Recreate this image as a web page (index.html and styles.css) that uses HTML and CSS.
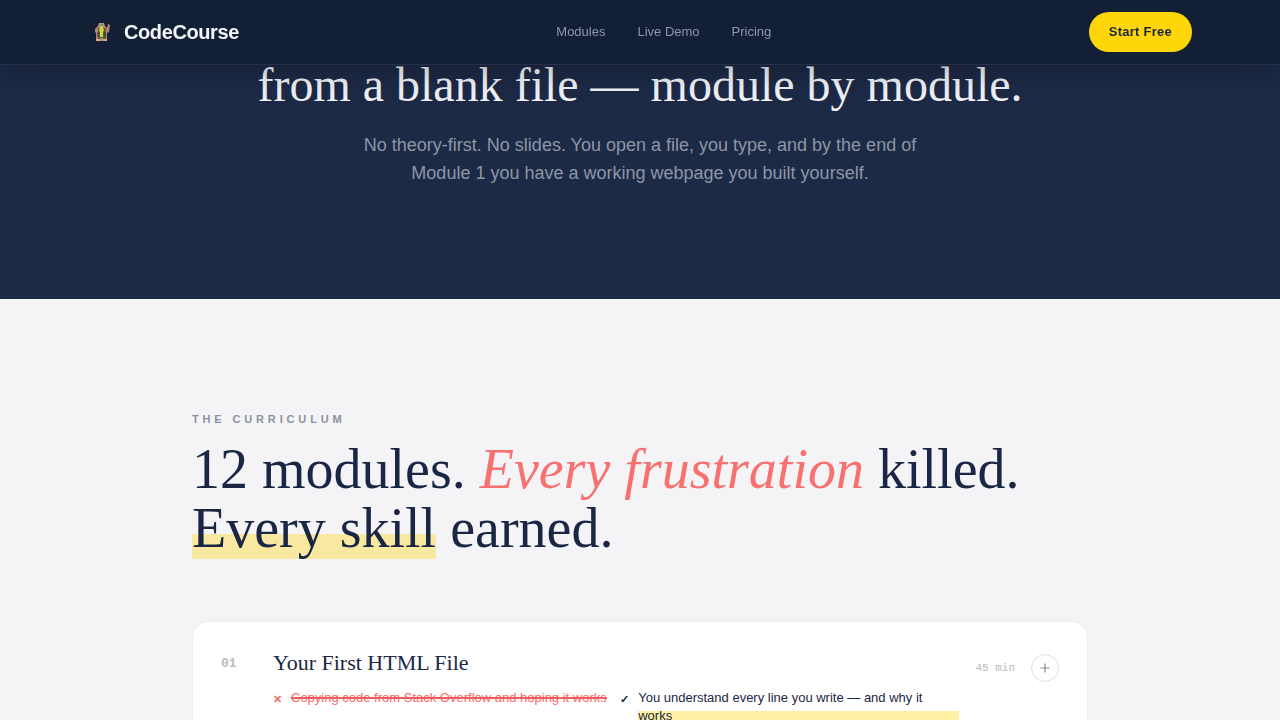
FILE: index.html
```html
<!DOCTYPE html>
<html lang="en">

<head>
    <meta charset="UTF-8">
    <meta name="viewport" content="width=device-width, initial-scale=1.0">
    <title>CodeCourse</title>
    <link rel="stylesheet" href="styles.css">
</head>

<body>

    <header class="header">
        <div class="header-inner">
            <a class="brand" href="#">
                <span class="brand-icon">
                    <svg width="16" height="20" viewBox="0 0 16 20" aria-hidden="true">
                        <path d="M4 4 L5 1 H10 L11 4 V7 H4Z" fill="#b99a78"/>
                        <path d="M1 7 L4 4 H11 L13 6 L14 2 L16 3 L15 10 L13 11 V19 H2 V11 L1 10Z" fill="#b58478"/>
                        <path d="M4 6 H12 V17 H4Z" fill="#5d5a38"/>
                        <path d="M6 4 H9 V6 L10 8 L9 10 V15 H6 V10 L5 8 L6 6Z" fill="#cfd43e"/>
                        <path d="M6 2 H9 V4 H6Z" fill="#8d8568"/>
                        <path d="M4 10 V15 M11 10 V15" stroke="#2b3440" stroke-width="1"/>
                        <path d="M2 17 H6 V19 H2Z M9 17 H13 V19 H9Z" fill="#d8aaa0"/>
                        <path d="M6 16 H9 V19 H6Z" fill="#a59a62"/>
                    </svg>
                </span>
                CodeCourse
            </a>
            <nav class="nav">
                <a href="#modules">Modules</a>
                <a href="#demo">Live Demo</a>
                <a href="#pricing">Pricing</a>
            </nav>
            <button class="start" type="button">Start Free</button>
        </div>
    </header>

    <section class="hero" id="demo">
        <h1>from a blank file — module by module.</h1>
        <p>No theory-first. No slides. You open a file, you type, and by the end of Module 1 you have a working webpage you built yourself.</p>
    </section>

    <section class="curriculum" id="modules">
        <div class="eyebrow">The Curriculum</div>
        <h2>12 modules. <em>Every frustration</em> killed.<br><span class="marker">Every skill</span> earned.</h2>

        <article class="module">
            <span class="module-num">01</span>
            <div class="module-body">
                <h3>Your First HTML File</h3>
                <div class="compare">
                    <div class="point before">
                        <span class="mark">✕</span>
                        <span class="text"><s>Copying code from Stack Overflow and hoping it works</s></span>
                    </div>
                    <div class="point after">
                        <span class="mark">✓</span>
                        <span class="text">You understand every line you write — and why it works</span>
                    </div>
                </div>
            </div>
            <div class="module-side">
                <span class="time">45 min</span>
                <button class="toggle" type="button" aria-label="Expand module">
                    <svg width="10" height="10" viewBox="0 0 10 10" aria-hidden="true">
                        <path d="M5 0.5 V9.5 M0.5 5 H9.5" stroke="#888" stroke-width="1.2"/>
                    </svg>
                </button>
            </div>
        </article>
    </section>

</body>

</html>
```

FILE: styles.css
```css
* { box-sizing: border-box; }
body { margin: 0; font-family: "Liberation Sans", Arial, sans-serif; color: #1a2744; background: #f4f4f7; }
h1, h2, h3, p { margin: 0; }
h1, h2, h3 { font-family: "Liberation Serif", "Times New Roman", serif; font-weight: 400; }
a { text-decoration: none; }
button { font-family: inherit; cursor: pointer; }

/* header */
.header { position: fixed; top: 0; left: 0; right: 0; z-index: 10; background: #131f35; border-bottom: 1px solid #25314a; box-shadow: 0 4px 32px rgba(0, 0, 0, 0.3); }
.header-inner { display: flex; justify-content: space-between; align-items: center; max-width: 1200px; margin: 0 auto; padding: 12px 48px; }
.brand { display: flex; align-items: center; gap: 8px; font-size: 20px; font-weight: 700; letter-spacing: -0.02em; color: #f3f6fb; }
.brand-icon { display: flex; justify-content: center; width: 28px; }
.nav { display: flex; gap: 32px; }
.nav a { font-size: 13px; line-height: 16px; color: #8d97a9; }
.start { height: 40px; padding: 0 20px; border: 0; border-radius: 20px; font-size: 13px; font-weight: 700; line-height: 16px; letter-spacing: 0.02em; color: #1a2744; background: #ffd60a; }

/* hero */
.hero { padding: 57px 24px 112px; text-align: center; background: #1d2a46; }
.hero h1 { font-size: 48px; line-height: 55px; color: #eff1f6; }
.hero p { max-width: 560px; margin: 19px auto 0; font-size: 18px; line-height: 28px; color: #8e95a5; }

/* curriculum */
.curriculum { max-width: 944px; margin: 0 auto; padding: 112px 24px; }
.eyebrow { font-size: 11px; font-weight: 700; line-height: 16px; letter-spacing: 0.35em; text-transform: uppercase; color: #8c92a1; }
.curriculum h2 { margin-top: 13px; font-size: 56px; line-height: 59px; }
.curriculum h2 em { color: #f87171; }
.marker { background: linear-gradient(transparent 60%, #f9e9a0 60%); }

.module { display: grid; grid-template-columns: 36px 1fr auto; gap: 16px; margin-top: 63px; padding: 29px 28px; border: 1px solid #ececef; border-radius: 16px; background: #fff; }
.module-num { padding-top: 4px; font-family: "Liberation Mono", monospace; font-size: 13px; font-weight: 700; line-height: 18px; color: #bbb; }
.module h3 { font-size: 22px; line-height: 24px; }
.compare { display: grid; grid-template-columns: 1fr 1fr; gap: 8px; margin-top: 14px; }
.point { display: flex; gap: 6px; font-size: 13px; line-height: 18px; }
.mark { flex: none; width: 12px; font-size: 11px; font-weight: 700; line-height: 20px; }
.text { flex: 1; }
.before { color: #f46d6d; }
.before s { text-decoration: line-through 2px #f15b5b; }
.after .text { background: linear-gradient(transparent 60%, #fff0a3 60%); }
.module-side { display: flex; align-items: center; align-self: start; gap: 16px; padding-top: 3px; }
.time { font-family: "Liberation Mono", monospace; font-size: 11px; color: #bbb; }
.toggle { display: flex; justify-content: center; align-items: center; width: 28px; height: 28px; padding: 0; border: 1px solid #ddd; border-radius: 50%; background: #fff; }
```
